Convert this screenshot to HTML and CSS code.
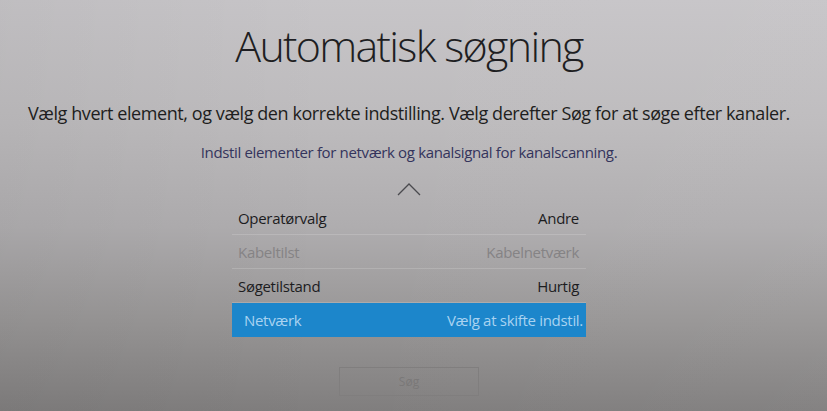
FILE: index.html
```html
<!DOCTYPE html>
<html lang="da">
<head>
<meta charset="utf-8">
<title>Automatisk søgning</title>
<link rel="stylesheet" href="styles.css">
</head>
<body>
<main class="screen">
  <h1 class="title">Automatisk søgning</h1>
  <p class="lead">Vælg hvert element, og vælg den korrekte indstilling. Vælg derefter Søg for at søge efter kanaler.</p>
  <p class="hint">Indstil elementer for netværk og kanalsignal for kanalscanning.</p>
  <div class="chevron">
    <svg width="24" height="14" viewBox="0 0 24 14"><path d="M1 13 L12 2 L23 13" fill="none" stroke="#4a4a4e" stroke-width="1.3"/></svg>
  </div>
  <ul class="list">
    <li class="row"><span class="label">Operatørvalg</span><span class="value">Andre</span></li>
    <li class="row disabled"><span class="label">Kabeltilst</span><span class="value">Kabelnetværk</span></li>
    <li class="row"><span class="label">Søgetilstand</span><span class="value">Hurtig</span></li>
    <li class="row selected"><span class="label">Netværk</span><span class="value">Vælg at skifte indstil.</span></li>
  </ul>
  <button class="search" type="button">Søg</button>
</main>
</body>
</html>
```
FILE: styles.css
```css
html, body {
  margin: 0;
  padding: 0;
}
body {
  width: 827px;
  height: 411px;
  overflow: hidden;
  font-family: "Open Sans", "Noto Sans", sans-serif;
  background:
    linear-gradient(90deg, rgba(0,0,0,0.04) 0%, rgba(0,0,0,0) 40%, rgba(255,255,255,0.03) 100%),
    linear-gradient(180deg, #c7c5c8 0%, #bdbbbd 30%, #afadaf 55%, #989696 78%, #807e7e 100%);
}
.screen {
  display: flex;
  flex-direction: column;
  align-items: center;
  height: 411px;
  padding-right: 9px;
  box-sizing: border-box;
}
.title {
  margin: 24px 0 0;
  font-size: 43px;
  line-height: 43px;
  font-weight: 300;
  letter-spacing: -1.7px;
  color: #1e1e22;
}
.lead {
  margin: 37px 0 0;
  font-size: 18px;
  line-height: 18px;
  font-weight: 400;
  letter-spacing: -0.42px;
  color: #1e1e20;
}
.hint {
  margin: 23px 0 0;
  font-size: 15px;
  line-height: 15px;
  letter-spacing: -0.35px;
  color: #34345c;
}
.chevron {
  margin-top: 22px;
  height: 14px;
  display: flex;
}
.list {
  list-style: none;
  margin: 5px 0 0;
  padding: 0;
  width: 354px;
}
.row {
  display: flex;
  justify-content: space-between;
  height: 34px;
  line-height: 34px;
  padding: 0 7px 0 6px;
  font-size: 15px;
  letter-spacing: -0.3px;
  color: #1c1c1e;
  border-bottom: 1px solid rgba(255,255,255,0.16);
  box-sizing: border-box;
}
.row.disabled {
  color: #858385;
}
.row.selected {
  background: #1c86cb;
  color: #a9d3f1;
  border-bottom: none;
  padding: 0 3px 0 12px;
}
.search {
  margin-top: 30px;
  width: 140px;
  height: 29px;
  background: transparent;
  border: 1px solid #807e7e;
  font-family: "Open Sans", "Noto Sans", sans-serif;
  font-size: 12px;
  color: #7a7878;
  padding: 0;
}
```
